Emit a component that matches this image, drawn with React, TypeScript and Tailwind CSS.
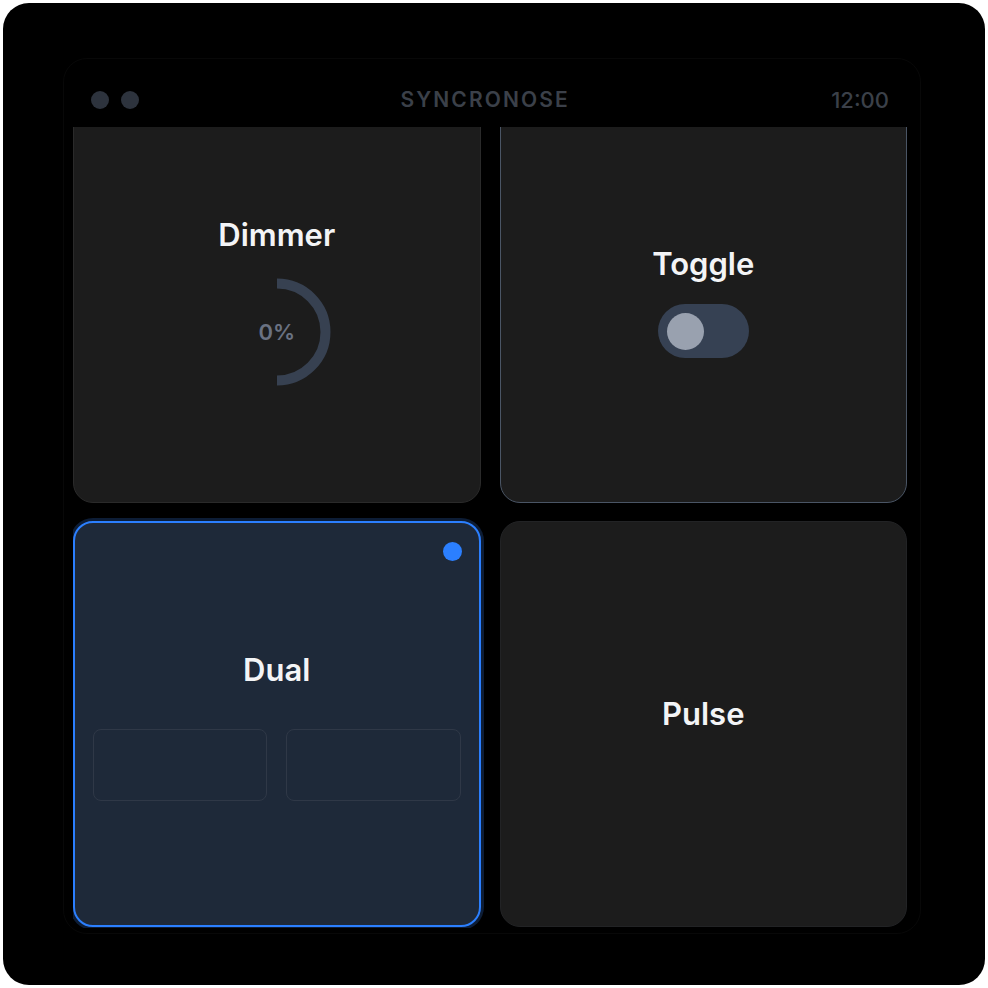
import { ReactNode } from 'react'

function Dimmer(): ReactNode {
  return (
    <div className="flex h-full flex-col items-center justify-center rounded-[20px] border border-[#2a2a2a] bg-[#1c1c1c] pt-[10px]">
      <h2 className="text-[31px] leading-[34px] font-semibold text-gray-100">Dimmer</h2>
      <div className="relative mt-[20px] h-[120px] w-[120px]">
        <svg width="120" height="120" viewBox="0 0 120 120" className="absolute inset-0">
          <path d="M60 11.5 A48.5 48.5 0 0 1 60 108.5" fill="none" stroke="#374151" strokeWidth="10" />
        </svg>
        <div className="absolute inset-0 flex items-center justify-center text-[22px] font-semibold text-gray-500">
          0%
        </div>
      </div>
    </div>
  )
}

function Toggle(): ReactNode {
  return (
    <div className="flex h-full flex-col items-center justify-center rounded-[20px] border border-gray-600 bg-[#1c1c1c] pt-[5px]">
      <h2 className="text-[31px] leading-[34px] font-semibold text-gray-100">Toggle</h2>
      <button className="mt-[23px] flex h-[54px] w-[91px] items-center rounded-full bg-gray-700 px-[9px]">
        <span className="h-[37px] w-[37px] rounded-full bg-gray-400" />
      </button>
    </div>
  )
}

function Dual(): ReactNode {
  return (
    <div className="relative flex h-full flex-col items-center justify-center rounded-[20px] border-2 border-blue-500 bg-gray-800 px-[18px] pt-[6px] shadow-[0_0_0_3px_rgba(59,130,246,0.22)]">
      <span className="absolute top-[19px] right-[17px] h-[19px] w-[19px] rounded-full bg-blue-500" />
      <h2 className="text-[31px] leading-[34px] font-semibold text-gray-100">Dual</h2>
      <div className="mt-[42px] grid w-full grid-cols-2 gap-[19px]">
        <div className="h-[72px] rounded-lg border border-[#2f3847]" />
        <div className="h-[72px] rounded-lg border border-[#2f3847]" />
      </div>
    </div>
  )
}

function Pulse(): ReactNode {
  return (
    <div className="flex h-full flex-col items-center justify-center rounded-[20px] border border-[#222325] bg-[#1c1c1c] pb-[20px]">
      <h2 className="text-[31px] leading-[34px] font-semibold text-gray-100">Pulse</h2>
    </div>
  )
}

export default function App(): ReactNode {
  return (
    <div className="h-[988px] w-[988px] bg-white p-[3px] font-['Inter','Noto_Sans',sans-serif]">
      <div className="h-full w-full rounded-[26px] bg-black pt-[55px] pl-[60px]">
        <div className="h-[876px] w-[858px] rounded-[24px] border border-[#080808] pr-[13px] pl-[9px]">
          {/* Header */}
          <div className="flex h-[68px] items-center justify-between px-[18px] pt-[14px]">
            <div className="flex items-center gap-[12px]">
              <span className="h-[18px] w-[18px] rounded-full bg-[#2d333d]" />
              <span className="h-[18px] w-[18px] rounded-full bg-[#2d333d]" />
            </div>
            <span className="text-[21px] font-semibold tracking-[0.1em] text-[#3b4049]">SYNCRONOSE</span>
            <span className="text-[22px] font-medium text-[#3b4049]">12:00</span>
          </div>

          {/* Grid */}
          <div className="h-[801px] overflow-hidden">
            <div className="-mt-[30px] grid h-[830px] w-[834px] grid-cols-2 grid-rows-2 gap-x-[19px] gap-y-[18px]">
              <Dimmer />
              <Toggle />
              <Dual />
              <Pulse />
            </div>
          </div>
        </div>
      </div>
    </div>
  )
}
